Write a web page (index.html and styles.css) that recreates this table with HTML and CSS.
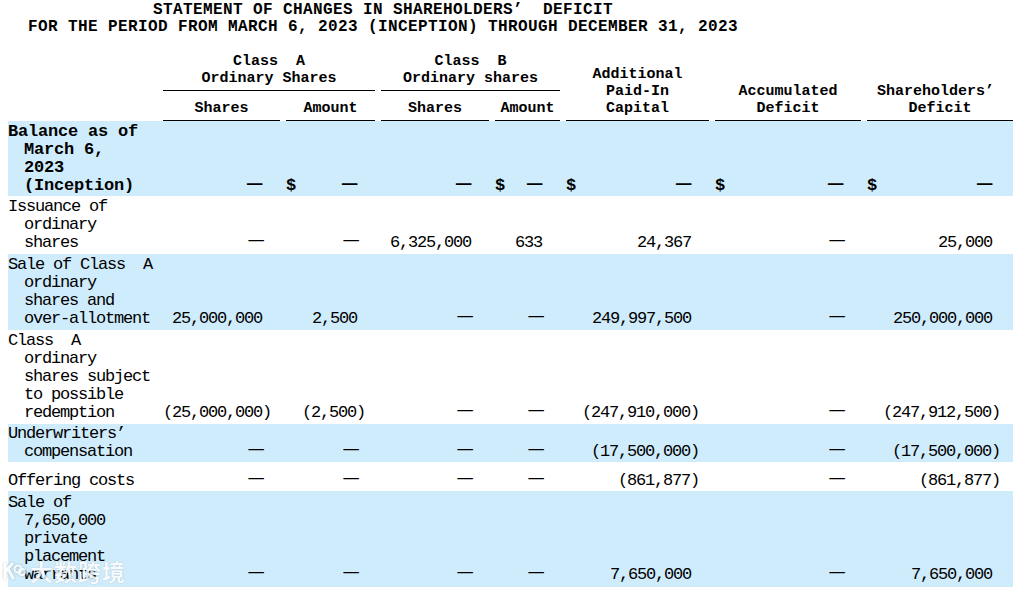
FILE: index.html
```html
<!DOCTYPE html>
<html lang="en">
<head>
<meta charset="utf-8">
<title>Statement of Changes in Shareholders' Deficit</title>
<link rel="stylesheet" href="styles.css">
</head>
<body>
<div class="title">
  <p>STATEMENT OF CHANGES IN SHAREHOLDERS’  DEFICIT</p>
  <p>FOR THE PERIOD FROM MARCH 6, 2023 (INCEPTION) THROUGH DECEMBER 31, 2023</p>
</div>

<table class="stmt">
  <colgroup>
    <col class="w-lbl">
    <col class="w-as">
    <col class="w-gap">
    <col class="w-aa">
    <col class="w-gap">
    <col class="w-bs">
    <col class="w-gap">
    <col class="w-ba">
    <col class="w-gap">
    <col class="w-apic">
    <col class="w-gap">
    <col class="w-acc">
    <col class="w-gap">
    <col class="w-sh">
  </colgroup>
  <thead>
    <tr class="h1">
      <th rowspan="2"></th>
      <th colspan="3" class="ul">Class&nbsp; A<br>Ordinary Shares</th>
      <th rowspan="2"></th>
      <th colspan="3" class="ul">Class&nbsp; B<br>Ordinary shares</th>
      <th rowspan="2"></th>
      <th rowspan="2" class="ul">Additional<br>Paid-In<br>Capital</th>
      <th rowspan="2"></th>
      <th rowspan="2" class="ul">Accumulated<br>Deficit</th>
      <th rowspan="2"></th>
      <th rowspan="2" class="ul">Shareholders’&nbsp;<br>Deficit</th>
    </tr>
    <tr class="h2">
      <th class="ul">Shares</th>
      <th></th>
      <th class="ul">Amount</th>
      <th class="ul">Shares</th>
      <th></th>
      <th class="ul">Amount</th>
    </tr>
  </thead>
  <tbody>
    <tr class="alt bold r-bal">
      <td class="lbl">Balance as of<br>March 6,<br>2023<br>(Inception)</td>
      <td class="num"><span class="dash">—</span></td>
      <td></td>
      <td class="num"><span class="usd">$</span><span class="dash">—</span></td>
      <td></td>
      <td class="num"><span class="dash">—</span></td>
      <td></td>
      <td class="num"><span class="usd">$</span><span class="dash">—</span></td>
      <td></td>
      <td class="num"><span class="usd">$</span><span class="dash">—</span></td>
      <td></td>
      <td class="num"><span class="usd">$</span><span class="dash">—</span></td>
      <td></td>
      <td class="num last"><span class="usd">$</span><span class="dash">—</span></td>
    </tr>
    <tr class="r-iss">
      <td class="lbl">Issuance of<br>ordinary<br>shares</td>
      <td class="num"><span class="dash">—</span></td>
      <td></td>
      <td class="num"><span class="dash">—</span></td>
      <td></td>
      <td class="num">6,325,000</td>
      <td></td>
      <td class="num">633</td>
      <td></td>
      <td class="num">24,367</td>
      <td></td>
      <td class="num"><span class="dash">—</span></td>
      <td></td>
      <td class="num last">25,000</td>
    </tr>
    <tr class="alt r-sale">
      <td class="lbl">Sale of Class&nbsp; A<br>ordinary<br>shares and<br>over-allotment</td>
      <td class="num">25,000,000</td>
      <td></td>
      <td class="num">2,500</td>
      <td></td>
      <td class="num"><span class="dash">—</span></td>
      <td></td>
      <td class="num"><span class="dash">—</span></td>
      <td></td>
      <td class="num">249,997,500</td>
      <td></td>
      <td class="num"><span class="dash">—</span></td>
      <td></td>
      <td class="num last">250,000,000</td>
    </tr>
    <tr class="r-red">
      <td class="lbl">Class&nbsp; A<br>ordinary<br>shares subject<br>to possible<br>redemption</td>
      <td class="num"><span class="neg">(25,000,000)</span></td>
      <td></td>
      <td class="num"><span class="neg">(2,500)</span></td>
      <td></td>
      <td class="num"><span class="dash">—</span></td>
      <td></td>
      <td class="num"><span class="dash">—</span></td>
      <td></td>
      <td class="num"><span class="neg">(247,910,000)</span></td>
      <td></td>
      <td class="num"><span class="dash">—</span></td>
      <td></td>
      <td class="num last"><span class="neg">(247,912,500)</span></td>
    </tr>
    <tr class="alt r-uw">
      <td class="lbl">Underwriters’<br>compensation</td>
      <td class="num"><span class="dash">—</span></td>
      <td></td>
      <td class="num"><span class="dash">—</span></td>
      <td></td>
      <td class="num"><span class="dash">—</span></td>
      <td></td>
      <td class="num"><span class="dash">—</span></td>
      <td></td>
      <td class="num"><span class="neg">(17,500,000)</span></td>
      <td></td>
      <td class="num"><span class="dash">—</span></td>
      <td></td>
      <td class="num last"><span class="neg">(17,500,000)</span></td>
    </tr>
    <tr class="r-off">
      <td class="lbl">Offering costs</td>
      <td class="num"><span class="dash">—</span></td>
      <td></td>
      <td class="num"><span class="dash">—</span></td>
      <td></td>
      <td class="num"><span class="dash">—</span></td>
      <td></td>
      <td class="num"><span class="dash">—</span></td>
      <td></td>
      <td class="num"><span class="neg">(861,877)</span></td>
      <td></td>
      <td class="num"><span class="dash">—</span></td>
      <td></td>
      <td class="num last"><span class="neg">(861,877)</span></td>
    </tr>
    <tr class="alt r-last">
      <td class="lbl">Sale of<br>7,650,000<br>private<br>placement<br>warrants</td>
      <td class="num"><span class="dash">—</span></td>
      <td></td>
      <td class="num"><span class="dash">—</span></td>
      <td></td>
      <td class="num"><span class="dash">—</span></td>
      <td></td>
      <td class="num"><span class="dash">—</span></td>
      <td></td>
      <td class="num">7,650,000</td>
      <td></td>
      <td class="num"><span class="dash">—</span></td>
      <td></td>
      <td class="num last">7,650,000</td>
    </tr>
  </tbody>
</table>

<div class="watermark">
  <svg class="wm-logo" width="24" height="18" viewBox="0 0 24 18" aria-hidden="true">
    <path d="M3 2 L3 16 M3 10 L10 2 M6 7 L11 16" fill="none" stroke="#fff" stroke-width="3" stroke-linecap="round"/>
    <circle cx="16" cy="7" r="3.5" fill="none" stroke="#fff" stroke-width="2"/>
    <circle cx="20" cy="10" r="3" fill="none" stroke="#fff" stroke-width="2"/>
  </svg>
  <span class="wm-text">大数跨境</span>
</div>
</body>
</html>
```

FILE: styles.css
```css
html, body {
  margin: 0;
  padding: 0;
  background: #ffffff;
}

body {
  position: relative;
  padding: 0 8px;
  color: #000000;
  font-family: "Liberation Mono", "Courier New", monospace;
}

/* ---------- title ---------- */
.title {
  width: 750px;
  margin-top: 2px;
  text-align: center;
  font-weight: bold;
  font-size: 16px;
  line-height: 17px;
  letter-spacing: 0.4px;
}

.title p {
  margin: 0;
  white-space: pre;
}

/* ---------- table ---------- */
.stmt {
  width: 1005px;
  margin-top: 17px;
  table-layout: fixed;
  border-collapse: separate;
  border-spacing: 0;
}

.w-lbl { width: 155px; }
.w-as { width: 117px; }
.w-gap { width: 6px; }
.w-aa { width: 89px; }
.w-bs { width: 108px; }
.w-ba { width: 65px; }
.w-apic { width: 143px; }
.w-acc { width: 146px; }
.w-sh { width: 146px; }

.stmt th,
.stmt td {
  padding: 0;
}

/* header */
.stmt thead th {
  font-size: 15px;
  line-height: 17px;
  font-weight: bold;
  letter-spacing: 0;
  text-align: center;
  vertical-align: bottom;
  white-space: nowrap;
}

.stmt thead th.ul {
  border-bottom: 1px solid #000000;
  padding-bottom: 3px;
}

.stmt .h2 th {
  padding-top: 9px;
}

/* body */
.stmt tbody td {
  font-size: 17px;
  line-height: 18px;
  letter-spacing: -1.2px;
  vertical-align: bottom;
  white-space: nowrap;
  padding-top: 2px;
  padding-bottom: 2px;
}

.stmt tbody tr.alt {
  background: #cfecfc;
}

.stmt tbody tr.bold td {
  font-weight: bold;
  letter-spacing: -0.2px;
}

.stmt tbody td.lbl {
  text-align: left;
  padding-left: 16px;
  text-indent: -16px;
}

.stmt tbody td.num {
  text-align: right;
  padding-right: 18px;
}

.stmt tbody td.num.last {
  padding-right: 21px;
}

.usd {
  float: left;
}

.neg {
  margin-right: -8px;
}

.dash {
  display: inline-block;
  transform: translateY(-2px) scaleX(1.5);
  transform-origin: right center;
}

/* row heights */
.stmt tbody tr.r-bal td { padding-top: 2px; padding-bottom: 1px; }
.stmt tbody tr.r-uw td { padding-top: 1px; padding-bottom: 1px; }
.stmt tbody tr.r-off td { padding-top: 10px; padding-bottom: 1px; }
.stmt tbody tr.r-last td { padding-top: 3px; padding-bottom: 3px; }

/* ---------- watermark ---------- */
.watermark {
  position: absolute;
  left: 2px;
  top: 559px;
  display: flex;
  align-items: center;
  gap: 4px;
  opacity: 0.8;
}

.wm-logo {
  display: block;
  filter: drop-shadow(0 0 1px rgba(0, 0, 0, 0.3));
}

.wm-text {
  font-family: "Noto Sans CJK SC", sans-serif;
  font-weight: bold;
  font-size: 23px;
  line-height: 24px;
  letter-spacing: 1px;
  color: #ffffff;
  text-shadow: 0 0 1px rgba(0, 0, 0, 0.4);
}
```
